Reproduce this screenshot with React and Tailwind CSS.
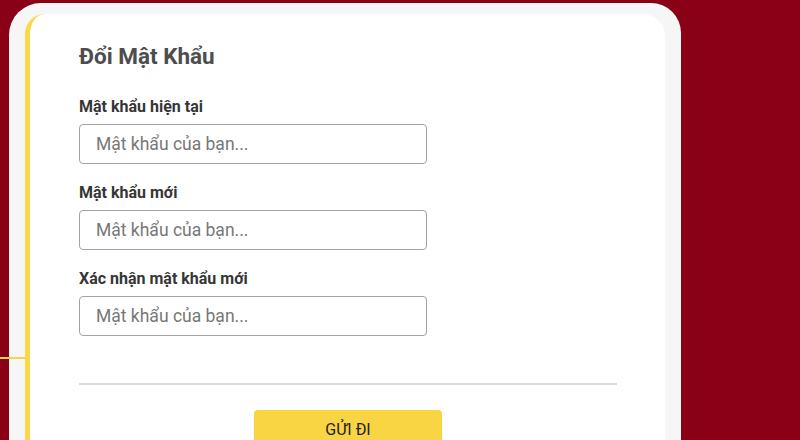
const fields = [
  { label: 'Mật khẩu hiện tại' },
  { label: 'Mật khẩu mới' },
  { label: 'Xác nhận mật khẩu mới' },
];

const App = () => {
  return (
    <div className="relative w-[800px] h-[440px] overflow-hidden bg-[#8a0017] pt-[3px] pl-[9px] font-['Roboto','Liberation_Sans',sans-serif]">
      {/* thin yellow accent line on the left edge */}
      <div className="absolute left-0 top-[357px] w-[27px] h-[2px] bg-[#f6d44a] z-10" />

      <div className="w-[672px] h-[460px] bg-[#f6f6f6] rounded-tl-[32px] rounded-tr-[30px] pt-[11px] px-4">
        <div className="h-full bg-white border-l-[5px] border-[#f9d849] rounded-tl-[20px] rounded-tr-[22px] pl-[49px] pr-[48px] pt-[30px]">
          <h2 className="text-[22.5px] leading-[24px] font-bold text-[#4d4d4d]">Đổi Mật Khẩu</h2>

          <div className="mt-[29px] flex flex-col gap-[19px]">
            {fields.map((f, i) => (
              <div key={i}>
                <label className="block text-[16px] leading-[20px] font-bold text-[#363636]">{f.label}</label>
                <input
                  type="password"
                  placeholder="Mật khẩu của bạn..."
                  className="mt-[7px] block w-[348px] h-[40px] rounded-[4px] border border-[#a3a3a3] px-4 text-[17.5px] text-[#333] placeholder:text-[#777] outline-none"
                />
              </div>
            ))}
          </div>

          <div className="mt-[47px] h-[2px] bg-[#dcdcdc]" />

          <div className="mt-[25px] flex justify-center">
            <button className="w-[188px] h-[40px] rounded-[4px] bg-[#f9d443] text-[16px] text-[#222]">GỬI ĐI</button>
          </div>
        </div>
      </div>
    </div>
  );
};

export default App;
